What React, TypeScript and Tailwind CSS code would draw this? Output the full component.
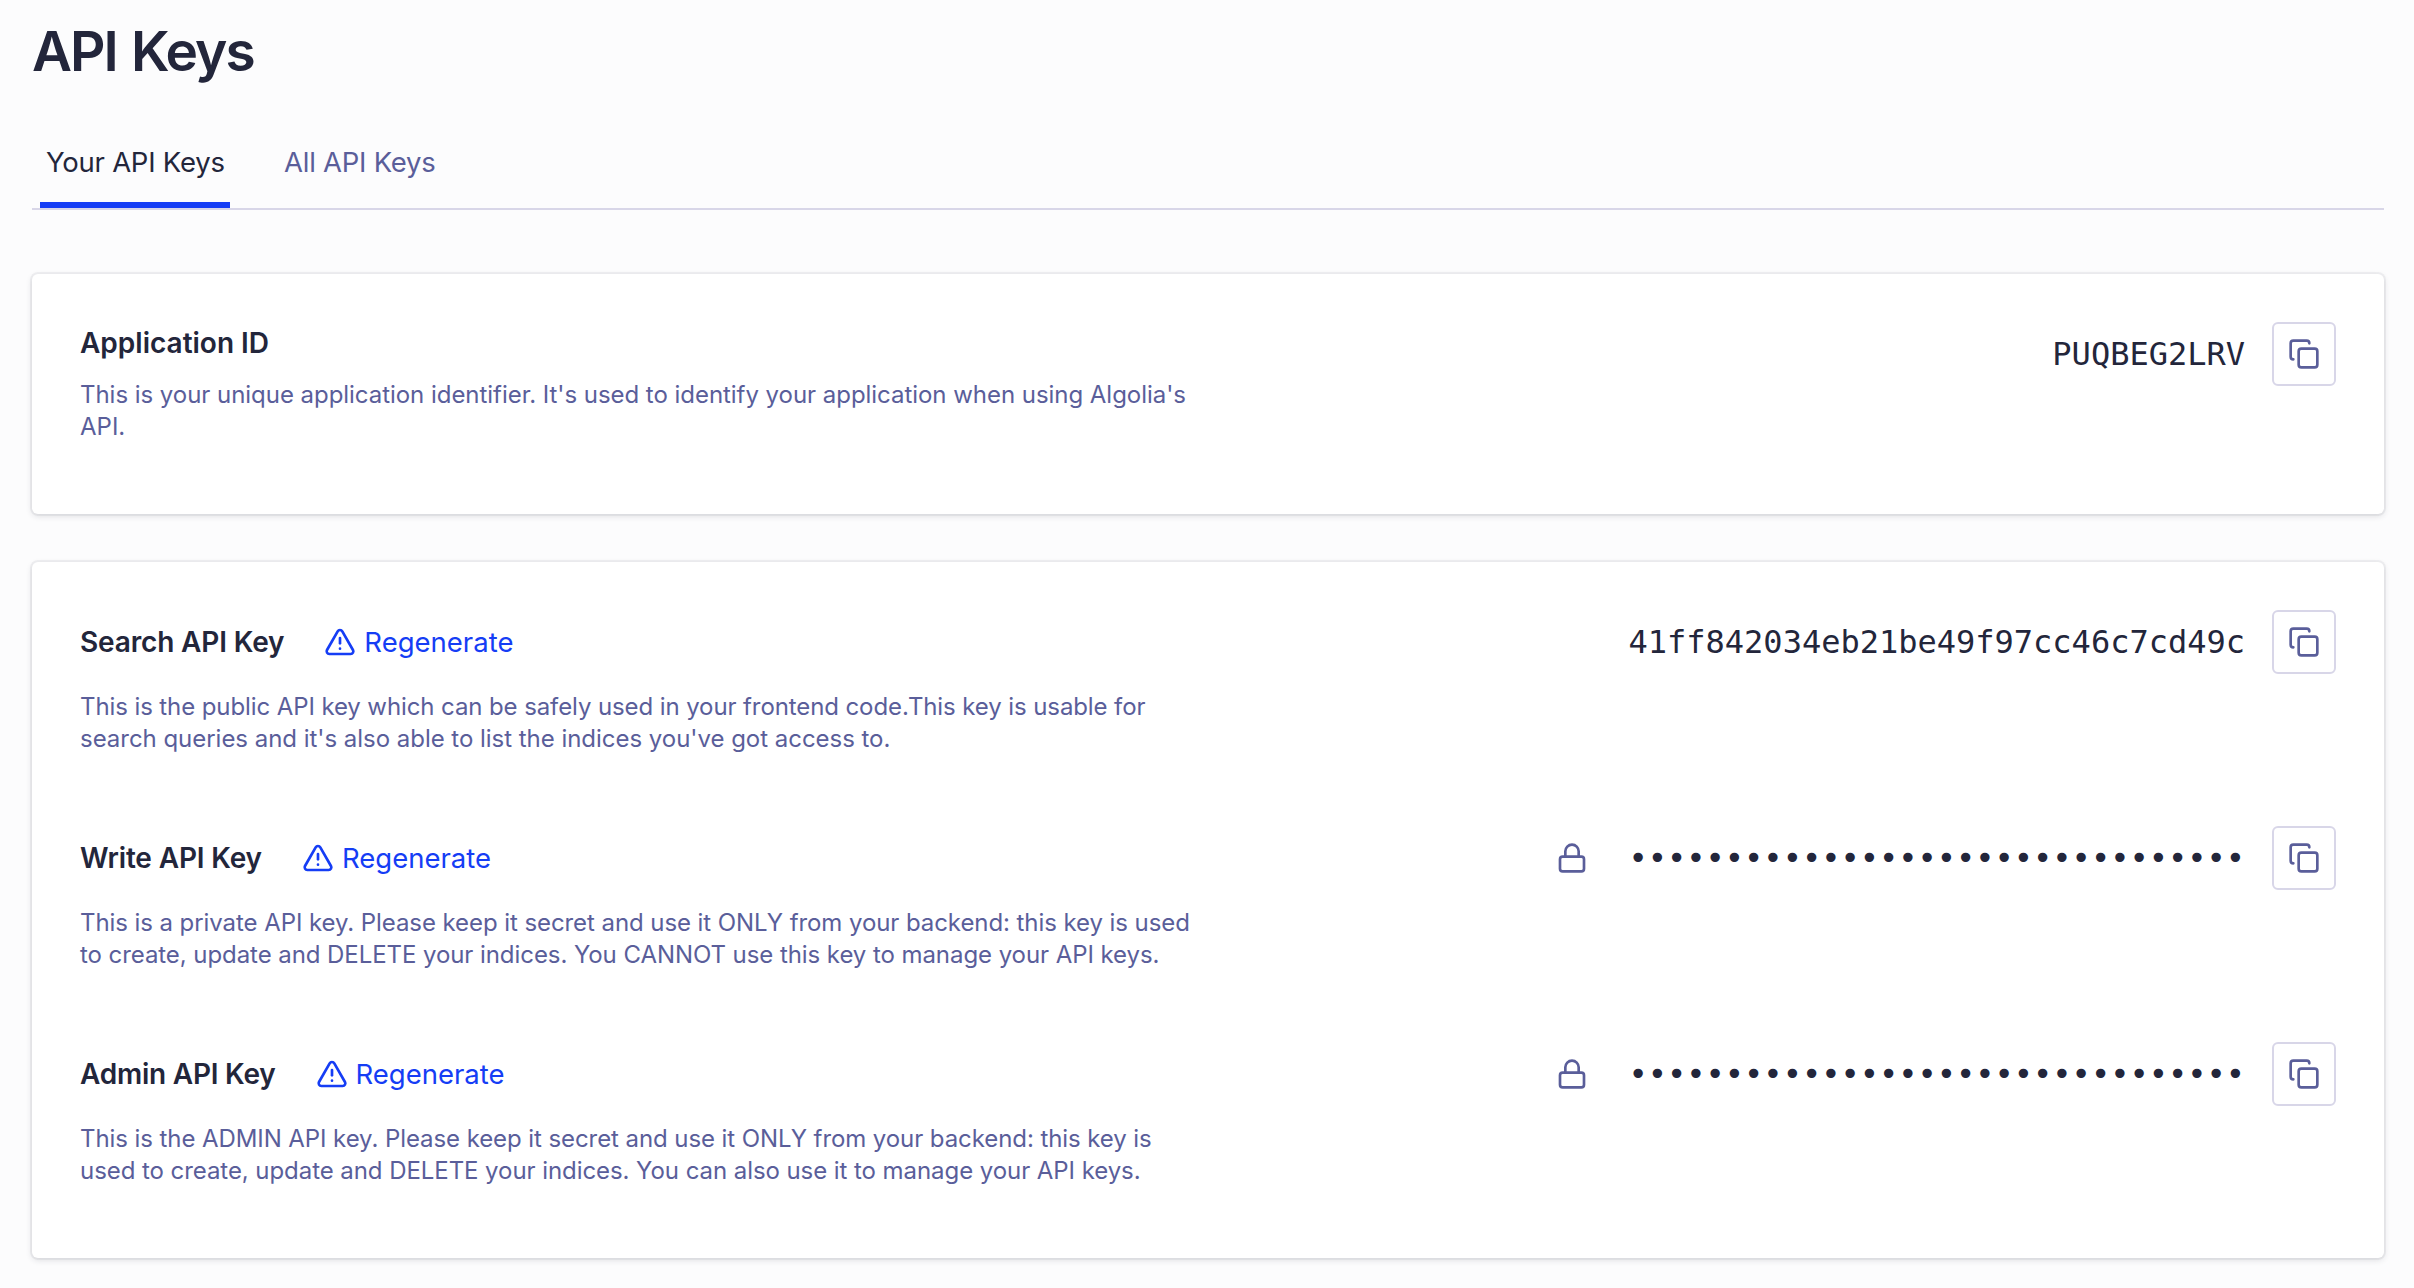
import React from 'react';
import { Copy, Lock, TriangleAlert } from 'lucide-react';

type Line = { text: string; tracking: string };

function CopyButton() {
  return (
    <button aria-label="Copy" className="flex h-16 w-16 shrink-0 items-center justify-center rounded-[6px] border-2 border-[#d8d6e8] bg-white text-[#5a5e9a]">
      <Copy size={32} strokeWidth={2} />
    </button>
  );
}

function Description({ lines }: { lines: Line[] }) {
  return (
    <p className="text-[24px] leading-8 whitespace-nowrap text-[#5a5e9a]">
      {lines.map((l) => (
        <span key={l.text} className={`block ${l.tracking}`}>{l.text}</span>
      ))}
    </p>
  );
}

function Mono({ children }: { children: string }) {
  return <span className="font-['DejaVu_Sans_Mono',monospace] text-[32px]">{children}</span>;
}

const keys = [
  {
    name: 'Search API Key',
    tracking: 'tracking-[-0.15px]',
    value: '41ff842034eb21be49f97cc46c7cd49c',
    lines: [
      { text: 'This is the public API key which can be safely used in your frontend code.This key is usable for', tracking: 'tracking-[-0.1px]' },
      { text: "search queries and it's also able to list the indices you've got access to.", tracking: 'tracking-[-0.03px]' },
    ],
  },
  {
    name: 'Write API Key',
    tracking: 'tracking-[-0.15px]',
    value: '',
    lines: [
      { text: 'This is a private API key. Please keep it secret and use it ONLY from your backend: this key is used', tracking: 'tracking-[-0.075px]' },
      { text: 'to create, update and DELETE your indices. You CANNOT use this key to manage your API keys.', tracking: 'tracking-[-0.07px]' },
    ],
  },
  {
    name: 'Admin API Key',
    tracking: 'tracking-[-0.23px]',
    value: '',
    lines: [
      { text: 'This is the ADMIN API key. Please keep it secret and use it ONLY from your backend: this key is', tracking: 'tracking-[-0.08px]' },
      { text: 'used to create, update and DELETE your indices. You can also use it to manage your API keys.', tracking: 'tracking-[-0.065px]' },
    ],
  },
];

export default function App() {
  return (
    <main className="h-[1288px] w-[2414px] overflow-hidden bg-[#fcfcfd] pt-[19px] pr-[30px] pl-8 font-['Inter',sans-serif] text-[#23263b]">
      <h1 className="text-[55px] leading-16 font-semibold tracking-[-2px] [word-spacing:2.5px]">API Keys</h1>
      <nav className="mt-[41px] flex h-[86px] border-b-2 border-[#d8d6e8] pl-2 text-[27.5px] tracking-[-0.25px] whitespace-nowrap">
        <a className="h-[84px] w-[190px] border-b-[6px] border-[#153df5] pt-[18px] pl-[6px]">Your API Keys</a>
        <a className="pt-[18px] pl-[54px] text-[#5a5e9a]">All API Keys</a>
      </nav>
      <section className="mt-16 flex h-[240px] justify-between rounded-[6px] bg-white px-12 pt-12 shadow-[0_0_0_2px_rgba(35,38,59,0.05),0_2px_6px_0_rgba(35,38,59,0.15)]">
        <div>
          <h2 className="mb-4 pt-px text-[28px] leading-10 font-semibold">Application ID</h2>
          <Description
            lines={[
              { text: "This is your unique application identifier. It's used to identify your application when using Algolia's", tracking: 'tracking-[-0.04px]' },
              { text: 'API.', tracking: 'tracking-normal' },
            ]}
          />
        </div>
        <div className="flex h-16 items-center gap-[27px]">
          <Mono>PUQBEG2LRV</Mono>
          <CopyButton />
        </div>
      </section>
      <section className="mt-12 h-[696px] rounded-[6px] bg-white px-12 pt-12 shadow-[0_0_0_2px_rgba(35,38,59,0.05),0_2px_6px_0_rgba(35,38,59,0.15)]">
        {keys.map((k) => (
          <div key={k.name} className="flex h-[216px] justify-between">
            <div>
              <div className="mb-[17px] flex h-16 items-center gap-10">
                <h2 className={`text-[28px] font-semibold ${k.tracking}`}>{k.name}</h2>
                <button className="flex items-center gap-2 text-[27.5px] text-[#153df5]">
                  <TriangleAlert size={32} />
                  <span className="pt-0.5">Regenerate</span>
                </button>
              </div>
              <Description lines={k.lines} />
            </div>
            <div className="flex h-16 items-center gap-[27px]">
              {!k.value && <Lock size={32} className="mr-3.5 text-[#5a5e9a]" />}
              <Mono>{k.value || '•'.repeat(32)}</Mono>
              <CopyButton />
            </div>
          </div>
        ))}
      </section>
    </main>
  );
}
